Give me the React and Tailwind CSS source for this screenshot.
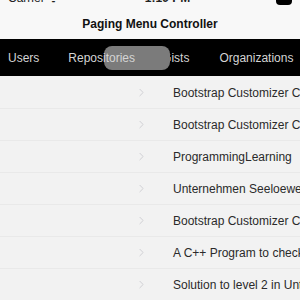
import { ChevronRight } from "lucide-react";

const REPOS = [
  "Bootstrap Customizer Config",
  "Bootstrap Customizer Config",
  "ProgrammingLearning",
  "Unternehmen Seeloewe",
  "Bootstrap Customizer Config",
  "A C++ Program to check",
  "Solution to level 2 in Untrusted",
];

function App() {
  return (
    <div className="w-[300px] h-[300px] overflow-hidden bg-[#f2f2f2] font-['Liberation_Sans',sans-serif] flex flex-col">
      {/* Status bar, cut at the top */}
      <div className="h-[6px] flex-shrink-0 bg-[#f8f8f8] overflow-hidden relative">
        <div className="flex items-start justify-between px-2 -mt-[9px] text-[12px] leading-[14px] text-[#222]">
          <span>Carrier ᯤ</span>
          <span className="font-bold">1:19 PM</span>
          <span className="w-[16px] h-[14px] bg-black rounded-sm"></span>
        </div>
      </div>

      {/* Title */}
      <div className="h-[33px] flex-shrink-0 bg-[#f8f8f8] flex items-center justify-center pt-[3px]">
        <h1 className="text-[12px] font-bold text-[#111]">Paging Menu Controller</h1>
      </div>

      {/* Paging menu */}
      <div className="relative h-[37px] flex-shrink-0 bg-black flex items-center text-[12px] text-[#d4d4d4] whitespace-nowrap pl-[8px]">
        <span>Users</span>
        <span className="ml-[29px] relative z-10">Repositories</span>
        <span className="ml-[27px]">Gists</span>
        <span className="ml-[30px]">Organizations</span>
        <div className="absolute left-[104px] top-[7px] w-[66px] h-[24px] rounded-[8px] bg-[#7b7b7b]"></div>
      </div>

      {/* Rows */}
      <div className="flex-1 pt-[1px]">
        {REPOS.map((name, i) => (
          <div
            key={i}
            className="h-[32px] flex items-center border-b border-[#e9e9e9] whitespace-nowrap overflow-hidden"
          >
            <ChevronRight className="ml-[135px] w-[13px] h-[13px] flex-shrink-0 text-[#c8c8cc]" strokeWidth={1.5} />
            <span className="ml-[25px] flex-shrink-0 text-[12px] text-[#2a2a2a]">{name}</span>
          </div>
        ))}
      </div>
    </div>
  );
}

export default App;
